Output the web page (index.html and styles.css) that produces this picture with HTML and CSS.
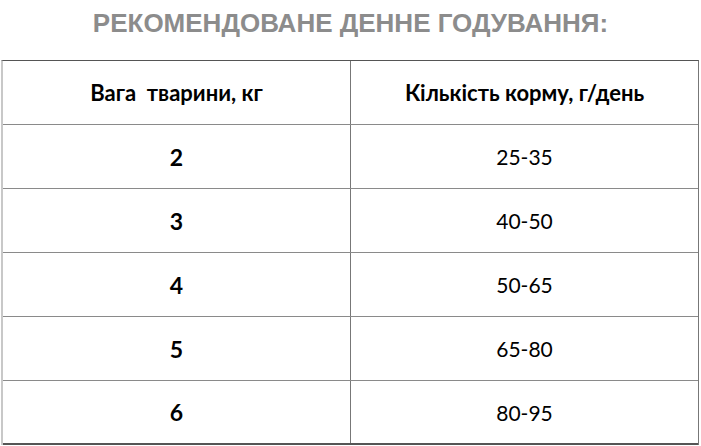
FILE: index.html
```html
<!DOCTYPE html>
<html lang="uk">
<head>
<meta charset="utf-8">
<title>Рекомендоване денне годування</title>
<link rel="stylesheet" href="styles.css">
</head>
<body>
<div class="page">
  <h1 class="title">РЕКОМЕНДОВАНЕ ДЕННЕ ГОДУВАННЯ:</h1>
  <div class="table">
    <div class="row head">
      <div class="cell bold">Вага&nbsp; тварини, кг</div>
      <div class="cell bold">Кількість корму, г/день</div>
    </div>
    <div class="row">
      <div class="cell bold num">2</div>
      <div class="cell">25-35</div>
    </div>
    <div class="row">
      <div class="cell bold num">3</div>
      <div class="cell">40-50</div>
    </div>
    <div class="row">
      <div class="cell bold num">4</div>
      <div class="cell">50-65</div>
    </div>
    <div class="row">
      <div class="cell bold num">5</div>
      <div class="cell">65-80</div>
    </div>
    <div class="row last">
      <div class="cell bold num">6</div>
      <div class="cell">80-95</div>
    </div>
  </div>
</div>
</body>
</html>
```
FILE: styles.css
```css
html, body {
  margin: 0;
  padding: 0;
  background: #ffffff;
}
.page {
  width: 701px;
  height: 446px;
  overflow: hidden;
}
.title {
  margin: 0;
  height: 60px;
  box-sizing: border-box;
  padding-top: 9px;
  text-align: center;
  font-family: "Liberation Sans", Arial, sans-serif;
  font-weight: bold;
  font-size: 26px;
  line-height: 28px;
  color: #8c8c8c;
  letter-spacing: 0;
}
.table {
  margin-left: 1px;
  width: 698px;
  border-top: 1px solid #555;
  border-left: 2px solid #c8c8c8;
  border-right: 1px solid #777;
  box-sizing: border-box;
}
.row {
  display: grid;
  grid-template-columns: 348px 1fr;
  height: 64px;
  border-bottom: 1px solid #8a8a8a;
  box-sizing: border-box;
}
.row.last {
  border-bottom: 2px solid #555;
}
.cell {
  display: flex;
  align-items: center;
  justify-content: center;
  font-family: Lato, "Open Sans", sans-serif;
  font-size: 21px;
  color: #000;
}
.cell:first-child {
  border-right: 1px solid #777;
}
.bold {
  font-weight: bold;
}
.num {
  font-size: 23px;
}
.head .cell {
  font-size: 22px;
}
```
